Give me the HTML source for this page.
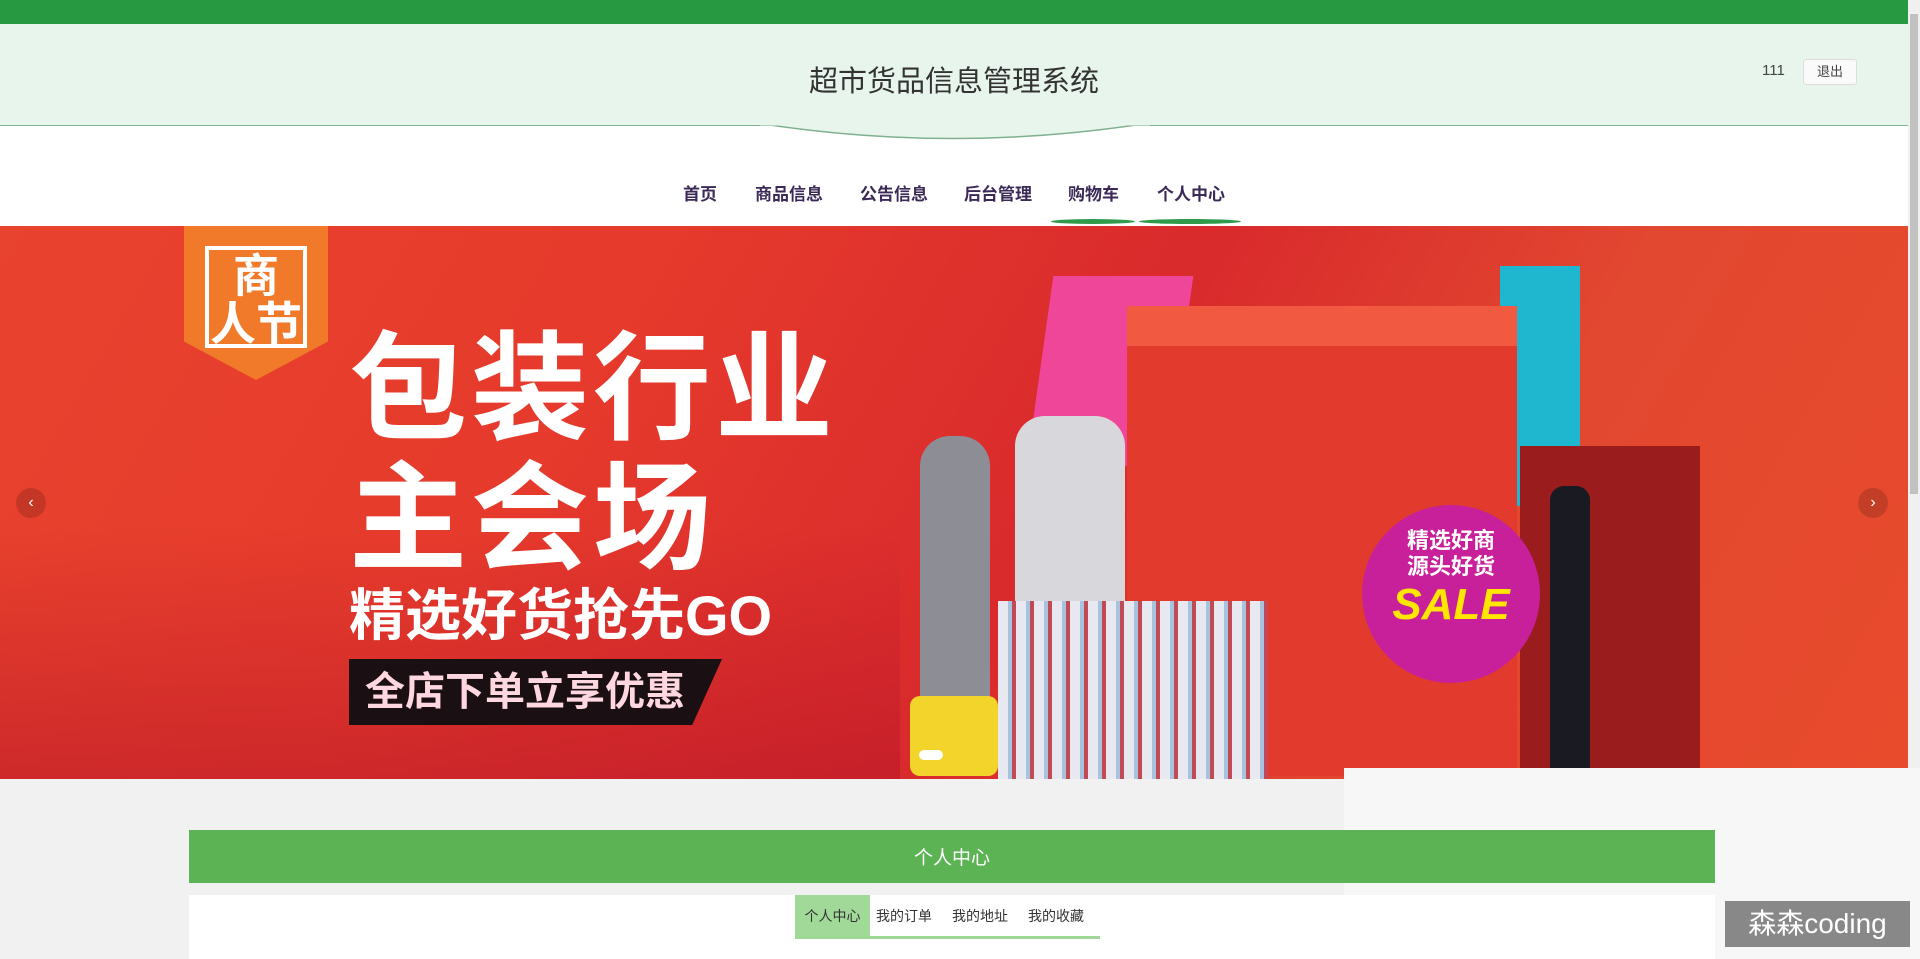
<!DOCTYPE html>
<html><head><meta charset="utf-8"><style>
*{margin:0;padding:0;box-sizing:border-box}
body{width:1920px;height:959px;overflow:hidden;background:#f1f1f1;font-family:"Liberation Sans","Noto Sans CJK SC",sans-serif;position:relative}
.a{position:absolute}
</style></head><body>
<div class="a" style="left:0;top:0;width:1908px;height:24px;background:#279a41"></div>
<div class="a" style="left:0;top:24px;width:1908px;height:202px;background:#fff"></div>
<div class="a" style="left:0;top:24px;width:1908px;height:102px;background:#e8f5ec;border-bottom:1.5px solid #7fb08f"></div>
<svg class="a" style="left:760px;top:124px" width="390" height="16"><path d="M10 1 Q193 28 376 1" fill="#e8f5ec" stroke="#7fb08f" stroke-width="1.5"/><rect x="0" y="0" width="390" height="1.5" fill="#e8f5ec"/></svg>
<div class="a" style="left:0;top:58px;width:1908px;text-align:center;font-size:29px;color:#333">超市货品信息管理系统</div>
<div class="a" style="left:1762px;top:62px;font-size:15px;color:#444">111</div>
<div class="a" style="left:1803px;top:59px;width:54px;height:26px;background:#fafafa;border:1px solid #ddd;border-radius:3px;font-size:13px;color:#444;text-align:center;line-height:24px">退出</div>
<div class="a" style="top:180px;left:683px;font-size:17px;color:#3b2a57;white-space:nowrap;font-weight:bold">
<span class="a" style="left:0">首页</span><span class="a" style="left:72px">商品信息</span><span class="a" style="left:177px">公告信息</span><span class="a" style="left:281px">后台管理</span><span class="a" style="left:385px">购物车</span><span class="a" style="left:474px">个人中心</span></div>
<div class="a" style="left:1051px;top:219px;width:84px;height:5px;border-radius:50%;background:#2e9a4a"></div>
<div class="a" style="left:1139px;top:219px;width:102px;height:5px;border-radius:50%;background:#2e9a4a"></div>
<!-- banner -->
<div class="a" style="left:0;top:226px;width:1908px;height:553px;overflow:hidden;background:linear-gradient(120deg,#e8432e 0%,#e63a2c 30%,#d92a2c 55%,#e24830 75%,#e84a2c 100%)">
<div class="a" style="left:0;top:300px;width:900px;height:260px;background:linear-gradient(180deg,transparent,rgba(180,20,40,.5))"></div>
<div class="a" style="left:184px;top:0;width:144px;height:154px;background:#f07a2a;clip-path:polygon(0 0,100% 0,100% 75%,50% 100%,0 75%)"></div>
<div class="a" style="left:205px;top:20px;width:102px;height:102px;border:4px solid #fff;color:#fff;font-size:46px;font-weight:bold;line-height:48px;text-align:center;padding-top:2px">商<br>人节</div>
<div class="a" style="left:349px;top:104px;font-size:118px;font-weight:bold;color:#fff;letter-spacing:4px;line-height:120px">包装行业</div>
<div class="a" style="left:349px;top:234px;font-size:118px;font-weight:bold;color:#fff;letter-spacing:4px;line-height:120px">主会场</div>
<div class="a" style="left:349px;top:360px;font-size:56px;font-weight:bold;color:#fff;line-height:60px">精选好货抢先GO</div>
<div class="a" style="left:349px;top:433px;width:373px;height:66px;background:#1a0f12;clip-path:polygon(0 0,100% 0,92% 100%,0 100%)"></div>
<div class="a" style="left:365px;top:441px;font-size:40px;font-weight:bold;color:#ffd7e0;line-height:50px">全店下单立享优惠</div>
<!-- products -->
<div class="a" style="left:1040px;top:50px;width:140px;height:190px;background:#f0469a;transform:skewX(-8deg)"></div>
<div class="a" style="left:1500px;top:40px;width:80px;height:240px;background:#1fb7d0"></div>
<div class="a" style="left:920px;top:210px;width:70px;height:330px;background:#8d8d95;border-radius:30px"></div>
<div class="a" style="left:1015px;top:190px;width:110px;height:350px;background:#d8d8dc;border-radius:30px"></div>
<div class="a" style="left:1127px;top:80px;width:390px;height:470px;background:#e23b2e"></div>
<div class="a" style="left:1127px;top:80px;width:390px;height:40px;background:#f15a40"></div>
<div class="a" style="left:1520px;top:220px;width:180px;height:340px;background:#9a1c1c"></div>
<div class="a" style="left:1550px;top:260px;width:40px;height:300px;background:#1a1a22;border-radius:14px 14px 0 0"></div>
<div class="a" style="left:998px;top:375px;width:270px;height:180px;background:repeating-linear-gradient(90deg,#e8e8f0 0 10px,#a6c4e0 10px 14px,#c14a55 14px 18px)"></div>
<div class="a" style="left:910px;top:470px;width:88px;height:80px;background:#f2d42a;border-radius:10px"></div>
<div class="a" style="left:1362px;top:279px;width:178px;height:178px;border-radius:50%;background:#c8209a"></div>
<div class="a" style="left:1362px;top:302px;width:178px;text-align:center;color:#fff;font-size:22px;font-weight:bold;line-height:26px">精选好商<br>源头好货</div>
<div class="a" style="left:1362px;top:354px;width:178px;text-align:center;color:#ffe600;font-size:44px;font-weight:bold;font-style:italic">SALE</div>
<div class="a" style="left:16px;top:262px;width:30px;height:30px;border-radius:50%;background:rgba(0,0,0,.15);color:#fff;text-align:center;line-height:30px;font-size:16px">‹</div>
<div class="a" style="left:1858px;top:262px;width:30px;height:30px;border-radius:50%;background:rgba(0,0,0,.15);color:#fff;text-align:center;line-height:30px;font-size:16px">›</div>
<div class="a" style="left:919px;top:524px;width:24px;height:10px;border-radius:5px;background:#fff"></div>
</div>
<!-- scrollbar -->
<div class="a" style="left:1908px;top:0;width:12px;height:959px;background:#f0f0f0"></div>
<div class="a" style="left:1910px;top:14px;width:8px;height:480px;background:#c1c1c1"></div>
<!-- content -->
<div class="a" style="left:1344px;top:768px;width:576px;height:191px;background:#f7f7f7"></div>
<div class="a" style="left:189px;top:830px;width:1526px;height:53px;background:#5cb354"></div>
<div class="a" style="left:189px;top:843px;width:1526px;text-align:center;color:#fff;font-size:19px">个人中心</div>
<div class="a" style="left:189px;top:895px;width:1526px;height:64px;background:#fff"></div>
<div class="a" style="left:795px;top:895px;width:305px;height:44px;border-bottom:3px solid #9fd897;font-size:14px;color:#333;line-height:42px">
<span class="a" style="left:0;width:75px;height:41px;background:#a1d998;text-align:center">个人中心</span>
<span class="a" style="left:81px">我的订单</span><span class="a" style="left:157px">我的地址</span><span class="a" style="left:233px">我的收藏</span></div>
<div class="a" style="left:1725px;top:901px;width:185px;height:46px;background:#888;color:#fff;font-size:28px;line-height:46px;text-align:center">森森coding</div>
</body></html>
